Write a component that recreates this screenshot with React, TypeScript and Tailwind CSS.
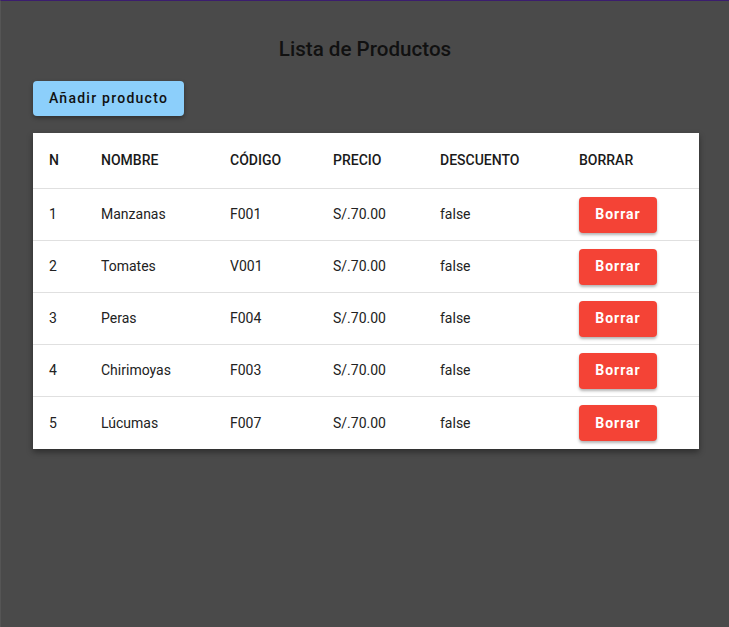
import React from "react";

const rows = [
  { n: 1, nombre: "Manzanas", codigo: "F001" },
  { n: 2, nombre: "Tomates", codigo: "V001" },
  { n: 3, nombre: "Peras", codigo: "F004" },
  { n: 4, nombre: "Chirimoyas", codigo: "F003" },
  { n: 5, nombre: "Lúcumas", codigo: "F007" },
];

export default function App() {
  return (
    <div
      className="min-h-[627px] w-full bg-[#4a4a4a] border-t border-t-[#3b1d6e] border-l border-l-[#555555]"
      style={{ fontFamily: "Roboto, 'Liberation Sans', sans-serif" }}
    >
      <div className="px-[32px] pt-[36px]">
        <h1 className="text-center text-[20.6px] leading-[24px] font-medium text-[#111111]">
          Lista de Productos
        </h1>
        <button className="mt-[20px] h-[35px] w-[151px] rounded-[4px] bg-[#8ccffb] text-[14px] font-medium tracking-[1.25px] text-[#111111] shadow-[0_2px_4px_rgba(0,0,0,0.35)]">
          Añadir producto
        </button>
        <div className="mt-[17px] w-[666px] bg-white shadow-[0_3px_6px_rgba(0,0,0,0.4)]">
          <table className="w-full table-fixed border-collapse text-[14px] text-[#222222]">
            <colgroup>
              <col className="w-[52px]" />
              <col className="w-[129px]" />
              <col className="w-[103px]" />
              <col className="w-[107px]" />
              <col className="w-[139px]" />
              <col className="w-[136px]" />
            </colgroup>
            <thead>
              <tr className="h-[55px] border-b border-[#e0e0e0]">
                {["N", "NOMBRE", "CÓDIGO", "PRECIO", "DESCUENTO", "BORRAR"].map((h) => (
                  <th key={h} className="pl-[16px] text-left font-medium text-[#1a1a1a]">
                    {h}
                  </th>
                ))}
              </tr>
            </thead>
            <tbody>
              {rows.map((r, i) => (
                <tr
                  key={r.n}
                  className={`${i === rows.length - 1 ? "h-[53px]" : "h-[52px] border-b border-[#e0e0e0]"}`}
                >
                  <td className="pl-[16px] pt-[1px]">{r.n}</td>
                  <td className="pl-[16px] pt-[1px]">{r.nombre}</td>
                  <td className="pl-[16px] pt-[1px]">{r.codigo}</td>
                  <td className="pl-[16px] pt-[1px]">S/.70.00</td>
                  <td className="pl-[16px] pt-[1px]">false</td>
                  <td className="pl-[16px] pt-[1px]">
                    <button className="h-[36px] w-[78px] rounded-[4px] bg-[#f44336] text-[14px] font-bold tracking-[1px] text-white shadow-[0_2px_3px_rgba(0,0,0,0.3)]">
                      Borrar
                    </button>
                  </td>
                </tr>
              ))}
            </tbody>
          </table>
        </div>
      </div>
    </div>
  );
}
